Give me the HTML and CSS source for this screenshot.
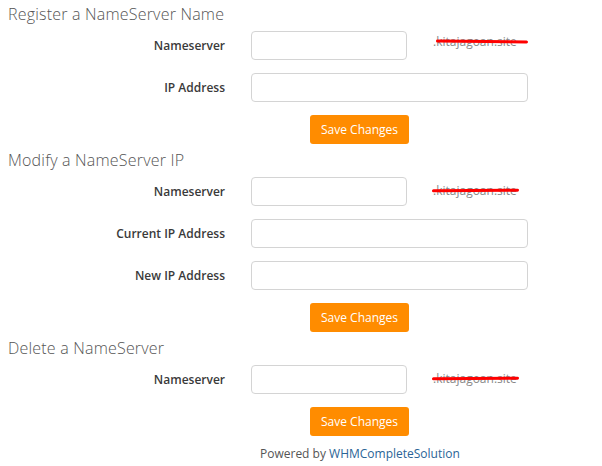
FILE: index.html
```html
<!DOCTYPE html>
<html>
<head>
<meta charset="utf-8">
<link rel="stylesheet" href="styles.css">
</head>
<body>
<div class="page">
  <section class="block">
    <h2 class="title">Register a NameServer Name</h2>
    <div class="form">
      <label class="label">Nameserver</label>
      <div class="field"><input class="input short" type="text"><span class="suffix s1">.kitajagoan.site</span></div>
      <label class="label">IP Address</label>
      <div class="field"><input class="input long" type="text"></div>
      <span></span>
      <div class="field"><button class="btn">Save Changes</button></div>
    </div>
  </section>
  <section class="block">
    <h2 class="title">Modify a NameServer IP</h2>
    <div class="form">
      <label class="label">Nameserver</label>
      <div class="field"><input class="input short" type="text"><span class="suffix s2">.kitajagoan.site</span></div>
      <label class="label">Current IP Address</label>
      <div class="field"><input class="input long" type="text"></div>
      <label class="label">New IP Address</label>
      <div class="field"><input class="input long" type="text"></div>
      <span></span>
      <div class="field"><button class="btn">Save Changes</button></div>
    </div>
  </section>
  <section class="block">
    <h2 class="title">Delete a NameServer</h2>
    <div class="form">
      <label class="label">Nameserver</label>
      <div class="field"><input class="input short" type="text"><span class="suffix s3">.kitajagoan.site</span></div>
      <span></span>
      <div class="field"><button class="btn">Save Changes</button></div>
    </div>
  </section>
  <p class="powered">Powered by <a class="link" href="#">WHMCompleteSolution</a></p>
</div>
</body>
</html>
```
FILE: styles.css
```css
html, body {
  margin: 0;
  padding: 0;
  background: #fff;
}
.page {
  padding: 4px 0 0 8px;
  font-family: "Open Sans", "Liberation Sans", sans-serif;
}
.block {
  margin-bottom: 6px;
}
.title {
  margin: 0;
  font-size: 16px;
  line-height: 20px;
  font-weight: 300;
  color: #555;
  letter-spacing: 0.2px;
}
.form {
  display: grid;
  grid-template-columns: 217px 1fr;
  column-gap: 26px;
  row-gap: 13px;
  margin-top: 7px;
  align-items: center;
}
.label {
  text-align: right;
  font-size: 12px;
  font-weight: 600;
  color: #3a3a3a;
}
.field {
  display: flex;
  align-items: center;
}
.input {
  box-sizing: border-box;
  height: 29px;
  border: 1px solid #d4d4d4;
  border-radius: 4px;
  background: #fff;
  margin: 0;
}
.short { width: 156px; }
.long { width: 277px; }
.suffix {
  position: relative;
  margin-left: 26px;
  margin-top: -8px;
  font-size: 12px;
  color: #888;
}
.suffix::after {
  content: "";
  position: absolute;
  left: 3px;
  right: -11px;
  top: 7px;
  height: 3px;
  border-radius: 2px;
  background: #f00;
  transform: rotate(0.5deg);
}
.s2, .s3 {
  margin-top: -2px;
}
.s2::after, .s3::after {
  left: -1px;
  right: -2px;
  top: 7px;
  transform: rotate(-0.5deg);
}
.btn {
  margin-left: 59px;
  width: 99px;
  height: 29px;
  border: none;
  border-radius: 3px;
  background: #ff8c00;
  color: #fff;
  font-family: "Open Sans", "Liberation Sans", sans-serif;
  font-size: 12px;
  padding: 0;
}
.powered {
  margin: 9px 0 0 252px;
  font-size: 12px;
  line-height: 18px;
  color: #555;
}
.link {
  color: #2a6496;
  text-decoration: none;
}
```
